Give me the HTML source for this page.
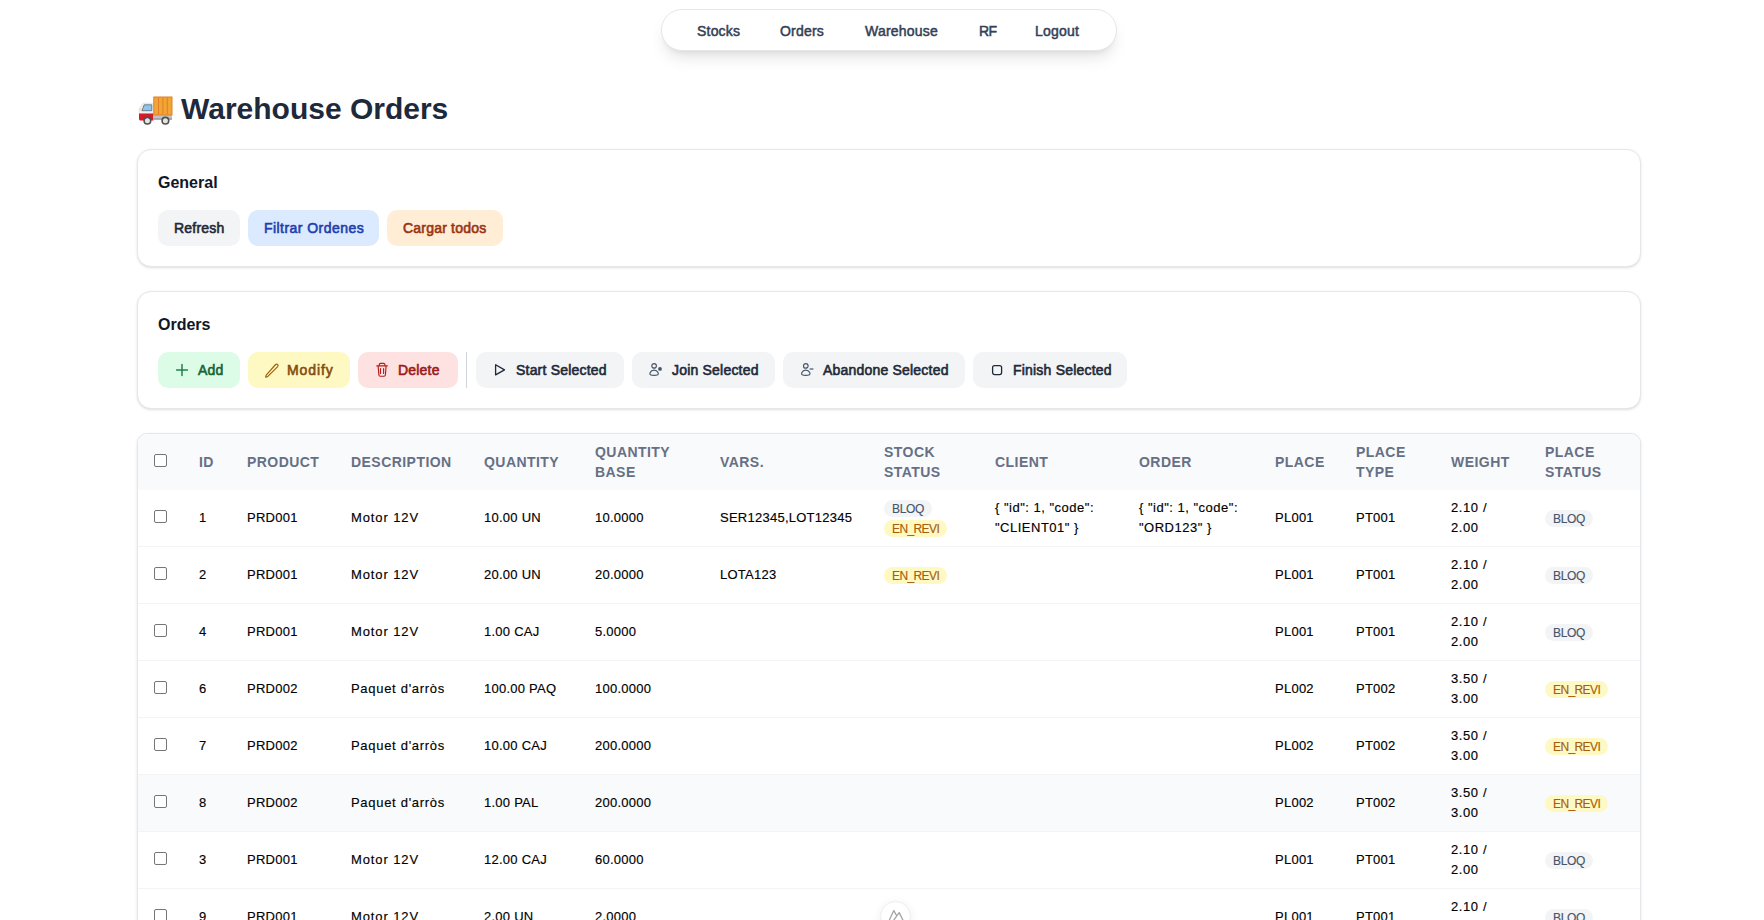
<!DOCTYPE html>
<html>
<head>
<meta charset="utf-8">
<style>
*{box-sizing:border-box;margin:0;padding:0}
html,body{width:1764px;height:920px;overflow:hidden;background:#ffffff;font-family:"Liberation Sans",sans-serif;color:#000}
.abs{position:absolute}
.nav{position:absolute;left:661px;top:9px;width:456px;height:42px;border:1px solid #e5e7eb;border-radius:21px;background:#fff;box-shadow:0 10px 15px -3px rgba(0,0,0,.1),0 4px 6px -4px rgba(0,0,0,.1)}
.nav span{position:absolute;top:13px;font-size:14px;font-weight:normal;-webkit-text-stroke-width:.5px;letter-spacing:.2px;color:#334155;white-space:nowrap;line-height:16px}
.title{position:absolute;left:181px;top:92px;font-size:30px;font-weight:bold;color:#1e293b;line-height:34px;white-space:nowrap}
.card{position:absolute;left:137px;width:1504px;border:1px solid #e5e7eb;border-radius:14px;background:#fff;box-shadow:0 1px 3px 0 rgba(0,0,0,.1),0 1px 2px -1px rgba(0,0,0,.1)}
.card h2{position:absolute;left:20px;font-size:16px;font-weight:bold;color:#0f172a;line-height:20px;white-space:nowrap}
.btn{position:absolute;top:0;height:36px;border-radius:10px;font-size:14px;font-weight:normal;-webkit-text-stroke-width:.6px;letter-spacing:.2px;white-space:nowrap}
.btn .t{position:absolute;top:10px;line-height:16px}
.btn svg{position:absolute}
.gray{background:#f3f4f6;color:#1f2937}
.blue{background:#dbeafe;color:#1e40af}
.orange{background:#ffedd5;color:#9a3412}
.green{background:#dcfce7;color:#166534}
.yellow{background:#fef9c3;color:#854d0e}
.red{background:#fee2e2;color:#991b1b}
.row{position:absolute;left:0;top:0}
.tcard{overflow:hidden}
.thead{position:absolute;left:0;top:0;width:1502px;height:56px;background:#f9fafb}
.th{position:absolute;top:0;height:56px;display:flex;align-items:center;font-size:14px;font-weight:bold;letter-spacing:.45px;line-height:20px;color:#667085;white-space:nowrap}
.tr{position:absolute;left:0;width:1502px;height:57px;border-bottom:1px solid #f3f4f6;background:#fff}
.tr.hov{background:#f8fafc}
.td{position:absolute;height:56px;display:flex;align-items:center;font-size:13px;line-height:20px;color:#000;white-space:nowrap;letter-spacing:.25px;-webkit-text-stroke-width:.15px}
.lw{letter-spacing:.9px}
.lw2{letter-spacing:.7px}
.wt{letter-spacing:.6px}
.js{letter-spacing:.5px}
.td.tb{line-height:20px}
.cb{position:absolute;width:13px;height:13px;border:1px solid #767676;border-radius:2px;background:#fff}
.bd{display:block;width:fit-content;height:17px;line-height:19px;padding:0 8px;border-radius:9px;font-size:12px}
.bd+br{display:none}
.bd+br+.bd{margin-top:3px}
.bq{background:#f3f4f6;color:#475569;letter-spacing:-.3px}
.er{background:#fef9c3;color:#a85d0c;letter-spacing:-.6px}

</style>
</head>
<body>
<div class="nav">
  <span style="left:35px">Stocks</span>
  <span style="left:118px">Orders</span>
  <span style="left:203px">Warehouse</span>
  <span style="left:317px;letter-spacing:-.5px">RF</span>
  <span style="left:373px">Logout</span>
</div>

<svg class="abs" style="left:136px;top:94px" width="40" height="34" viewBox="136 94 40 34">
<path d="M143.2 103.2h10.2v10.8h-14.3v-4.2c0-1.2.4-1.9 1-2.6z" fill="#f1f1f1" stroke="#d9d9d9" stroke-width=".6"/>
<path d="M144.2 104.8h7.6v5.9h-9.9z" fill="#8fc5ea" stroke="#5a6a7a" stroke-width=".8"/>
<rect x="139.2" y="108.6" width="2.2" height="1.8" fill="#ffe08a"/>
<path d="M139 113.6h14.4v6.8h-12.9c-.9 0-1.5-.6-1.5-1.5z" fill="#d7192a"/>
<rect x="153.4" y="114.6" width="18.6" height="4.6" fill="#c3c3c3"/>
<rect x="153.4" y="118.2" width="18.6" height="1.6" fill="#9e9e9e"/>
<rect x="153.8" y="97" width="18.2" height="18" fill="#f2a534" stroke="#e0802a" stroke-width="1"/>
<path d="M158.5 97.5v17M162.9 97.5v17M167.3 97.5v17" stroke="#e0802a" stroke-width="1"/>
<circle cx="147.4" cy="120.7" r="3.3" fill="#e5e5e5" stroke="#505050" stroke-width="1.6"/>
<circle cx="165.4" cy="120.7" r="3.3" fill="#e5e5e5" stroke="#505050" stroke-width="1.6"/>
</svg>
<div class="title">Warehouse Orders</div>

<div class="card" style="top:149px;height:118px">
  <h2 style="top:23px">General</h2>
  <div class="row" style="left:20px;top:60px">
    <div class="btn gray" style="left:0;width:82px"><span class="t" style="left:16px">Refresh</span></div>
    <div class="btn blue" style="left:90px;width:131px"><span class="t" style="left:16px;letter-spacing:.45px">Filtrar Ordenes</span></div>
    <div class="btn orange" style="left:229px;width:116px"><span class="t" style="left:16px">Cargar todos</span></div>
  </div>
</div>

<div class="card" style="top:291px;height:118px">
  <h2 style="top:23px">Orders</h2>
  <div class="row" style="left:0;top:60px">
    <div class="btn green" style="left:20px;width:82px">
      <svg style="left:17px;top:11px" width="14" height="14" viewBox="0 0 14 14"><path d="M7 1.6v10.8M1.6 7h10.8" stroke="#22804f" stroke-width="1.5" fill="none" stroke-linecap="round"/></svg>
      <span class="t" style="left:40px">Add</span></div>
    <div class="btn yellow" style="left:110px;width:102px">
      <svg style="left:16px;top:10px" width="16" height="16" viewBox="0 0 16 16"><path d="M11.6 2.5a1.45 1.45 0 0 1 2.05 2.05L3.6 14.6 1.6 15.2l.6-2Z" stroke="#a16207" stroke-width="1.2" fill="none" stroke-linejoin="round"/></svg>
      <span class="t" style="left:39px;letter-spacing:.9px">Modify</span></div>
    <div class="btn red" style="left:220px;width:100px">
      <svg style="left:17px;top:9px" width="16" height="18" viewBox="0 0 16 18"><path d="M1.8 4.9h10.5M11.1 4.9l-.7 9.1c-.1.7-.6 1.2-1.3 1.2H5.2c-.7 0-1.2-.5-1.3-1.2L3.1 4.9M4.3 4.9V3.6c0-.7.5-1.2 1.2-1.2h3.2c.7 0 1.2.5 1.2 1.2v1.3M5.5 7.6v4.8M8.6 7.6v4.8" stroke="#b91c1c" stroke-width="1.15" fill="none" stroke-linecap="round" stroke-linejoin="round"/></svg>
      <span class="t" style="left:40px">Delete</span></div>
    <div class="abs" style="left:328px;top:0;width:1px;height:36px;background:#d1d5db"></div>
    <div class="btn gray" style="left:338px;width:148px">
      <svg style="left:17px;top:10px" width="14" height="16" viewBox="0 0 14 16"><path d="M2.6 2.8v10.1L11.5 7.85Z" stroke="#1e293b" stroke-width="1.3" fill="none" stroke-linejoin="round"/></svg>
      <span class="t" style="left:40px">Start Selected</span></div>
    <div class="btn gray" style="left:494px;width:143px">
      <svg style="left:16px;top:10px" width="16" height="16" viewBox="0 0 16 16"><circle cx="6.1" cy="3.9" r="2.3" stroke="#475569" stroke-width="1.2" fill="none"/><path d="M2.4 12.7c-.6-.3-.6-1.3-.2-2.2.7-1.5 2.1-2.3 3.9-2.3s3.2.8 3.9 2.3c.4.9.4 1.9-.2 2.2-1 .5-2.3.7-3.7.7s-2.7-.2-3.7-.7Z" stroke="#475569" stroke-width="1.2" fill="none"/><circle cx="12" cy="6.9" r="1.9" fill="#475569"/></svg>
      <span class="t" style="left:40px">Join Selected</span></div>
    <div class="btn gray" style="left:645px;width:182px">
      <svg style="left:16px;top:10px" width="16" height="16" viewBox="0 0 16 16"><circle cx="6.8" cy="3.9" r="2.3" stroke="#475569" stroke-width="1.2" fill="none"/><path d="M3.1 12.7c-.6-.3-.6-1.3-.2-2.2.7-1.5 2.1-2.3 3.9-2.3s3.2.8 3.9 2.3c.4.9.4 1.9-.2 2.2-1 .5-2.3.7-3.7.7s-2.7-.2-3.7-.7Z" stroke="#475569" stroke-width="1.2" fill="none"/><path d="M10.6 7h3.8" stroke="#64748b" stroke-width="1.5"/></svg>
      <span class="t" style="left:40px">Abandone Selected</span></div>
    <div class="btn gray" style="left:835px;width:154px">
      <svg style="left:17px;top:10px" width="16" height="16" viewBox="0 0 16 16"><rect x="2.6" y="3.6" width="9" height="9" rx="2" stroke="#1e293b" stroke-width="1.3" fill="none"/></svg>
      <span class="t" style="left:40px">Finish Selected</span></div>
  </div>
</div>

<div class="card tcard" style="top:433px;height:520px;border-radius:10px;overflow:hidden">
<div class="thead"></div>
<div class="cb" style="left:16px;top:20px"></div>
<div class="th" style="left:61px"><div>ID</div></div>
<div class="th" style="left:109px"><div>PRODUCT</div></div>
<div class="th" style="left:213px"><div>DESCRIPTION</div></div>
<div class="th" style="left:346px"><div>QUANTITY</div></div>
<div class="th" style="left:457px"><div>QUANTITY<br>BASE</div></div>
<div class="th" style="left:582px"><div>VARS.</div></div>
<div class="th" style="left:746px"><div>STOCK<br>STATUS</div></div>
<div class="th" style="left:857px"><div>CLIENT</div></div>
<div class="th" style="left:1001px"><div>ORDER</div></div>
<div class="th" style="left:1137px"><div>PLACE</div></div>
<div class="th" style="left:1218px"><div>PLACE<br>TYPE</div></div>
<div class="th" style="left:1313px"><div>WEIGHT</div></div>
<div class="th" style="left:1407px"><div>PLACE<br>STATUS</div></div>
<div class="tr" style="top:56px"></div>
<div class="cb" style="left:16px;top:76px"></div>
<div class="td" style="left:61px;top:56px"><div>1</div></div>
<div class="td" style="left:109px;top:56px"><div>PRD001</div></div>
<div class="td lw" style="left:213px;top:56px"><div>Motor 12V</div></div>
<div class="td" style="left:346px;top:56px"><div>10.00 UN</div></div>
<div class="td" style="left:457px;top:56px"><div>10.0000</div></div>
<div class="td" style="left:582px;top:56px"><div>SER12345,LOT12345</div></div>
<div class="td tb" style="left:746px;top:56px"><div><span class="bd bq">BLOQ</span><br><span class="bd er">EN_REVI</span></div></div>
<div class="td js" style="left:857px;top:56px"><div>{ "id": 1, "code":<br>"CLIENT01" }</div></div>
<div class="td js" style="left:1001px;top:56px"><div>{ "id": 1, "code":<br>"ORD123" }</div></div>
<div class="td" style="left:1137px;top:56px"><div>PL001</div></div>
<div class="td" style="left:1218px;top:56px"><div>PT001</div></div>
<div class="td wt" style="left:1313px;top:56px"><div>2.10 /<br>2.00</div></div>
<div class="td tb" style="left:1407px;top:56px"><div><span class="bd bq">BLOQ</span></div></div>
<div class="tr" style="top:113px"></div>
<div class="cb" style="left:16px;top:133px"></div>
<div class="td" style="left:61px;top:113px"><div>2</div></div>
<div class="td" style="left:109px;top:113px"><div>PRD001</div></div>
<div class="td lw" style="left:213px;top:113px"><div>Motor 12V</div></div>
<div class="td" style="left:346px;top:113px"><div>20.00 UN</div></div>
<div class="td" style="left:457px;top:113px"><div>20.0000</div></div>
<div class="td" style="left:582px;top:113px"><div>LOTA123</div></div>
<div class="td tb" style="left:746px;top:113px"><div><span class="bd er">EN_REVI</span></div></div>
<div class="td" style="left:1137px;top:113px"><div>PL001</div></div>
<div class="td" style="left:1218px;top:113px"><div>PT001</div></div>
<div class="td wt" style="left:1313px;top:113px"><div>2.10 /<br>2.00</div></div>
<div class="td tb" style="left:1407px;top:113px"><div><span class="bd bq">BLOQ</span></div></div>
<div class="tr" style="top:170px"></div>
<div class="cb" style="left:16px;top:190px"></div>
<div class="td" style="left:61px;top:170px"><div>4</div></div>
<div class="td" style="left:109px;top:170px"><div>PRD001</div></div>
<div class="td lw" style="left:213px;top:170px"><div>Motor 12V</div></div>
<div class="td" style="left:346px;top:170px"><div>1.00 CAJ</div></div>
<div class="td" style="left:457px;top:170px"><div>5.0000</div></div>
<div class="td" style="left:1137px;top:170px"><div>PL001</div></div>
<div class="td" style="left:1218px;top:170px"><div>PT001</div></div>
<div class="td wt" style="left:1313px;top:170px"><div>2.10 /<br>2.00</div></div>
<div class="td tb" style="left:1407px;top:170px"><div><span class="bd bq">BLOQ</span></div></div>
<div class="tr" style="top:227px"></div>
<div class="cb" style="left:16px;top:247px"></div>
<div class="td" style="left:61px;top:227px"><div>6</div></div>
<div class="td" style="left:109px;top:227px"><div>PRD002</div></div>
<div class="td lw2" style="left:213px;top:227px"><div>Paquet d'arròs</div></div>
<div class="td" style="left:346px;top:227px"><div>100.00 PAQ</div></div>
<div class="td" style="left:457px;top:227px"><div>100.0000</div></div>
<div class="td" style="left:1137px;top:227px"><div>PL002</div></div>
<div class="td" style="left:1218px;top:227px"><div>PT002</div></div>
<div class="td wt" style="left:1313px;top:227px"><div>3.50 /<br>3.00</div></div>
<div class="td tb" style="left:1407px;top:227px"><div><span class="bd er">EN_REVI</span></div></div>
<div class="tr" style="top:284px"></div>
<div class="cb" style="left:16px;top:304px"></div>
<div class="td" style="left:61px;top:284px"><div>7</div></div>
<div class="td" style="left:109px;top:284px"><div>PRD002</div></div>
<div class="td lw2" style="left:213px;top:284px"><div>Paquet d'arròs</div></div>
<div class="td" style="left:346px;top:284px"><div>10.00 CAJ</div></div>
<div class="td" style="left:457px;top:284px"><div>200.0000</div></div>
<div class="td" style="left:1137px;top:284px"><div>PL002</div></div>
<div class="td" style="left:1218px;top:284px"><div>PT002</div></div>
<div class="td wt" style="left:1313px;top:284px"><div>3.50 /<br>3.00</div></div>
<div class="td tb" style="left:1407px;top:284px"><div><span class="bd er">EN_REVI</span></div></div>
<div class="tr hov" style="top:341px"></div>
<div class="cb" style="left:16px;top:361px"></div>
<div class="td" style="left:61px;top:341px"><div>8</div></div>
<div class="td" style="left:109px;top:341px"><div>PRD002</div></div>
<div class="td lw2" style="left:213px;top:341px"><div>Paquet d'arròs</div></div>
<div class="td" style="left:346px;top:341px"><div>1.00 PAL</div></div>
<div class="td" style="left:457px;top:341px"><div>200.0000</div></div>
<div class="td" style="left:1137px;top:341px"><div>PL002</div></div>
<div class="td" style="left:1218px;top:341px"><div>PT002</div></div>
<div class="td wt" style="left:1313px;top:341px"><div>3.50 /<br>3.00</div></div>
<div class="td tb" style="left:1407px;top:341px"><div><span class="bd er">EN_REVI</span></div></div>
<div class="tr" style="top:398px"></div>
<div class="cb" style="left:16px;top:418px"></div>
<div class="td" style="left:61px;top:398px"><div>3</div></div>
<div class="td" style="left:109px;top:398px"><div>PRD001</div></div>
<div class="td lw" style="left:213px;top:398px"><div>Motor 12V</div></div>
<div class="td" style="left:346px;top:398px"><div>12.00 CAJ</div></div>
<div class="td" style="left:457px;top:398px"><div>60.0000</div></div>
<div class="td" style="left:1137px;top:398px"><div>PL001</div></div>
<div class="td" style="left:1218px;top:398px"><div>PT001</div></div>
<div class="td wt" style="left:1313px;top:398px"><div>2.10 /<br>2.00</div></div>
<div class="td tb" style="left:1407px;top:398px"><div><span class="bd bq">BLOQ</span></div></div>
<div class="tr" style="top:455px"></div>
<div class="cb" style="left:16px;top:475px"></div>
<div class="td" style="left:61px;top:455px"><div>9</div></div>
<div class="td" style="left:109px;top:455px"><div>PRD001</div></div>
<div class="td lw" style="left:213px;top:455px"><div>Motor 12V</div></div>
<div class="td" style="left:346px;top:455px"><div>2.00 UN</div></div>
<div class="td" style="left:457px;top:455px"><div>2.0000</div></div>
<div class="td" style="left:1137px;top:455px"><div>PL001</div></div>
<div class="td" style="left:1218px;top:455px"><div>PT001</div></div>
<div class="td wt" style="left:1313px;top:455px"><div>2.10 /<br>2.00</div></div>
<div class="td tb" style="left:1407px;top:455px"><div><span class="bd bq">BLOQ</span></div></div>
</div>

<div class="abs" style="left:880px;top:901px;width:31px;height:31px;border-radius:50%;background:#fff;border:1px solid #eceef0;box-shadow:0 2px 10px rgba(0,0,0,.07)">
<svg class="abs" style="left:6px;top:5px" width="18" height="18" viewBox="0 0 18 18"><path d="M1.6 14.8 6.8 3.6l2.6 4.6M4.9 15.6l7.3-10 4.8 9.6" stroke="#a3a3a3" stroke-width="1.3" fill="none" stroke-linejoin="round" stroke-linecap="round"/></svg>
</div>
</body>
</html>
